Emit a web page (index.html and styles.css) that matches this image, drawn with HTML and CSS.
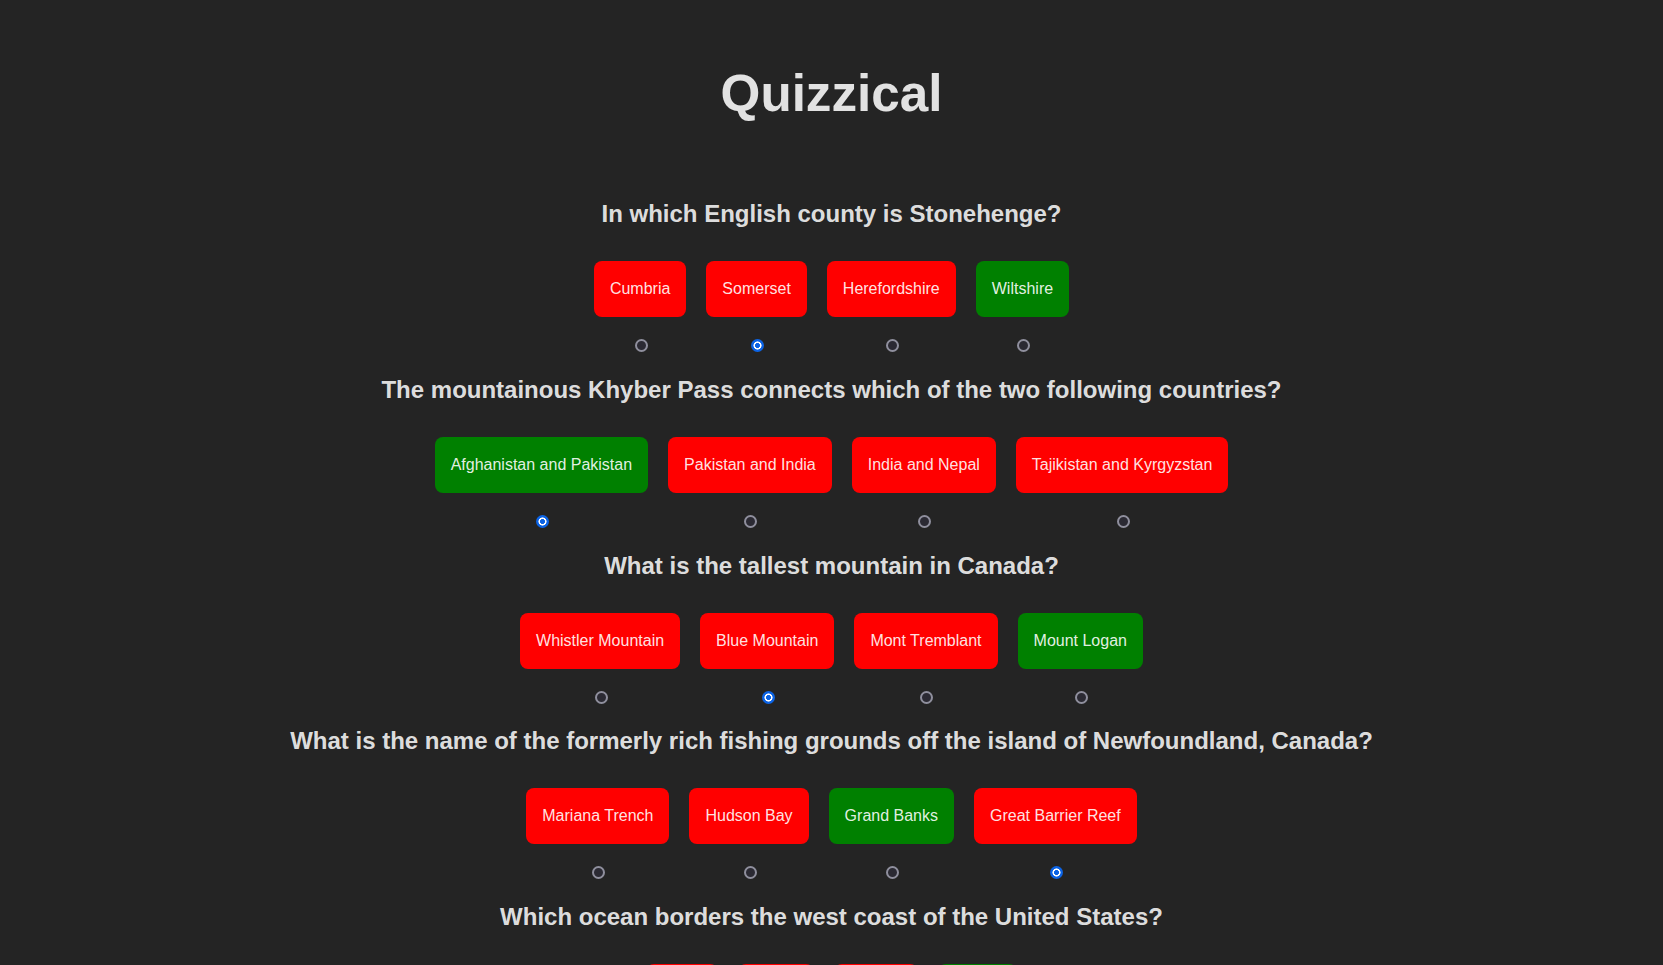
FILE: index.html
```html
<!DOCTYPE html>
<html lang="en">
<head>
<meta charset="utf-8">
<title>Quizzical</title>
<link rel="stylesheet" href="styles.css">
</head>
<body>
<div class="root">
  <h1 class="title">Quizzical</h1>
  <div class="quiz">
    <section class="question">
      <h2 class="question-text">In which English county is Stonehenge?</h2>
      <div class="options">
        <label class="option"><span class="answer wrong">Cumbria</span><input class="pick" type="radio" name="q1"></label>
        <label class="option"><span class="answer wrong">Somerset</span><input class="pick" type="radio" name="q1" checked></label>
        <label class="option"><span class="answer wrong">Herefordshire</span><input class="pick" type="radio" name="q1"></label>
        <label class="option"><span class="answer right">Wiltshire</span><input class="pick" type="radio" name="q1"></label>
      </div>
    </section>
    <section class="question">
      <h2 class="question-text">The mountainous Khyber Pass connects which of the two following countries?</h2>
      <div class="options">
        <label class="option"><span class="answer right">Afghanistan and Pakistan</span><input class="pick" type="radio" name="q2" checked></label>
        <label class="option"><span class="answer wrong">Pakistan and India</span><input class="pick" type="radio" name="q2"></label>
        <label class="option"><span class="answer wrong">India and Nepal</span><input class="pick" type="radio" name="q2"></label>
        <label class="option"><span class="answer wrong">Tajikistan and Kyrgyzstan</span><input class="pick" type="radio" name="q2"></label>
      </div>
    </section>
    <section class="question">
      <h2 class="question-text">What is the tallest mountain in Canada?</h2>
      <div class="options">
        <label class="option"><span class="answer wrong">Whistler Mountain</span><input class="pick" type="radio" name="q3"></label>
        <label class="option"><span class="answer wrong">Blue Mountain</span><input class="pick" type="radio" name="q3" checked></label>
        <label class="option"><span class="answer wrong">Mont Tremblant</span><input class="pick" type="radio" name="q3"></label>
        <label class="option"><span class="answer right">Mount Logan</span><input class="pick" type="radio" name="q3"></label>
      </div>
    </section>
    <section class="question">
      <h2 class="question-text">What is the name of the formerly rich fishing grounds off the island of Newfoundland, Canada?</h2>
      <div class="options">
        <label class="option"><span class="answer wrong">Mariana Trench</span><input class="pick" type="radio" name="q4"></label>
        <label class="option"><span class="answer wrong">Hudson Bay</span><input class="pick" type="radio" name="q4"></label>
        <label class="option"><span class="answer right">Grand Banks</span><input class="pick" type="radio" name="q4"></label>
        <label class="option"><span class="answer wrong">Great Barrier Reef</span><input class="pick" type="radio" name="q4" checked></label>
      </div>
    </section>
    <section class="question">
      <h2 class="question-text">Which ocean borders the west coast of the United States?</h2>
      <div class="options">
        <label class="option"><span class="answer wrong">Arctic</span><input class="pick" type="radio" name="q5"></label>
        <label class="option"><span class="answer wrong">Indian</span><input class="pick" type="radio" name="q5"></label>
        <label class="option"><span class="answer wrong">Atlantic</span><input class="pick" type="radio" name="q5"></label>
        <label class="option"><span class="answer right">Pacific</span><input class="pick" type="radio" name="q5"></label>
      </div>
    </section>
  </div>
</div>
</body>
</html>
```
FILE: styles.css
```css
html {
  background: #242424;
}
body {
  margin: 0;
  background: #242424;
  color: rgba(255, 255, 255, 0.87);
  font-family: "Liberation Sans", Arial, sans-serif;
  line-height: 1.5;
}
.root {
  padding: 32px;
  text-align: center;
}
.title {
  margin: 34px 0 0;
  font-size: 51.2px;
  line-height: 1.1;
  font-weight: 700;
}
.quiz {
  margin-top: 74px;
  display: flex;
  flex-direction: column;
  gap: 19.7px;
}
.question {
  display: flex;
  flex-direction: column;
  align-items: center;
}
.question-text {
  margin: 0;
  font-size: 24px;
  line-height: 36px;
  font-weight: 700;
}
.options {
  margin-top: 29px;
  display: flex;
  justify-content: center;
  gap: 20px;
}
.option {
  display: flex;
  flex-direction: column;
  align-items: center;
  gap: 22px;
}
.answer {
  display: block;
  padding: 19px 16px;
  font-size: 16px;
  line-height: 18px;
  border-radius: 8px;
  color: rgba(255, 255, 255, 0.9);
  white-space: nowrap;
}
.wrong {
  background: #ff0000;
}
.right {
  background: #008000;
}
.pick {
  appearance: none;
  -webkit-appearance: none;
  box-sizing: border-box;
  width: 13px;
  height: 13px;
  margin: 0 0 0 2px;
  border-radius: 50%;
  border: 2px solid #8f8f9d;
  background: #2b2a33;
}
.pick:checked {
  border: none;
  background: radial-gradient(circle, #0b63e5 0 2.2px, #ffffff 2.7px 3.8px, #0b63e5 4.3px);
}
```
